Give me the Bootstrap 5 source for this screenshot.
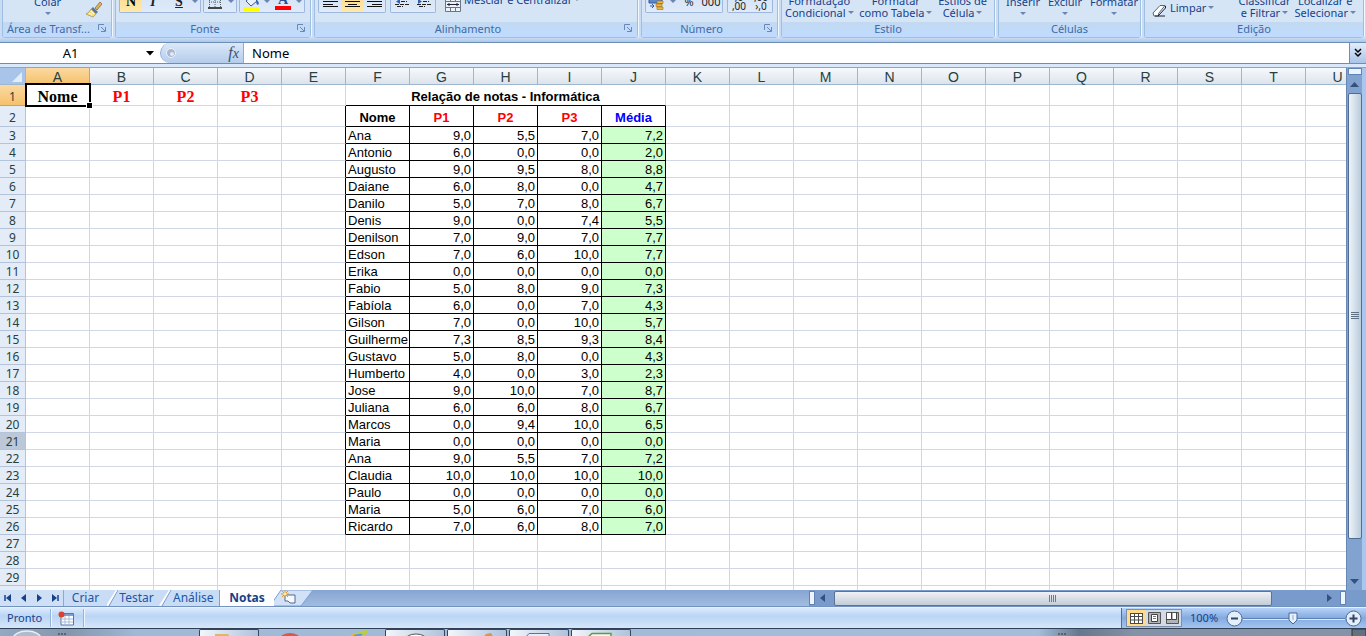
<!DOCTYPE html>
<html lang="pt-BR">
<head>
<meta charset="utf-8">
<meta name="viewport" content="width=device-width, initial-scale=1">
<title>Notas</title>
<link href="https://cdn.jsdelivr.net/npm/bootstrap@5.3.0/dist/css/bootstrap.min.css" rel="stylesheet">
<style>
:root{--ui:"Noto Sans","Open Sans",sans-serif;--grid:"Liberation Sans",Arial,sans-serif;--ink:#15428b;--edge:#8db2e3}
body{font-family:var(--ui);font-size:11px;line-height:12px;color:var(--ink);background:#bfdbff}
button{font:inherit;color:inherit;background:none;border:0;padding:0}
svg{display:block;flex:none}

/* ribbon */
.ribbon{height:42px;gap:3px;padding:0 2px 4px;background:linear-gradient(#c9dcf3 0 38px,#a9c7ea)}
.rgroup{border:1px solid #9ebfe2;border-top:0;border-radius:0 0 3px 3px;background:#d6e5f6;box-shadow:1px 0 0 #f0f7ff}
.rgroup:last-child{flex:1 1 0}
.rbody{height:22px;overflow:hidden;padding:0 3px}
.rname{height:15px;background:linear-gradient(#c2d9f1,#bfdbff);color:#3e6aaa;line-height:14px}
.rname svg{right:5px;top:2px}
.two{line-height:12px;padding-bottom:3px;white-space:nowrap;text-align:center}
.tools{border:1px solid #9db8dc;border-top:0;border-radius:0 0 2px 2px;height:22px;margin-bottom:9px;background:linear-gradient(#d3e2f5,#dfeafa)}
.tools button{height:21px;display:flex;align-items:center;justify-content:center;color:#222}
.tools .on{background:linear-gradient(#fdd98c,#ffe9a8)}
.tools .b22{width:22px}
.tools .b16{width:16px}
.tools .b10{width:10px}
.decimals{font-size:10px;line-height:9px}
.serifed{font-family:"Liberation Serif",serif;font-size:14px;font-weight:700}
.arr{display:inline-block;border:3px solid transparent;border-top-color:#6a86b0;border-bottom:0;vertical-align:3px;margin-left:2px}
.w-a{width:110px}.w-b{width:196px}.w-c{width:324px}.w-d{width:137px}.w-e{width:214px}.w-f{width:143px}

/* formula bar */
.fbar{height:22px;border:solid #6c8fb8;border-width:1px 0;background:#fff;color:#000;font-size:13px}
.fbar input{border:0;outline:0;padding:0;background:none;font:inherit;color:inherit;min-width:0}
.namebox{width:160px}
.namebox input{width:141px;text-align:center}
.pill{width:84px;background:linear-gradient(#dbe8f8,#b4cceb);border:1px solid #8faed6;border-width:0 1px 0 1px;border-radius:11px 0 0 11px}
.fx{font-size:16px;font-weight:400;color:#3d4f6c}
.expand{width:17px;background:linear-gradient(#e2edfa,#a9c4e8);border-left:1px solid #6c8fb8!important}
.strip{height:4px;background:#d9e8fa;border-bottom:1px solid #8aa6c4}

/* sheet */
.view{background:#fff;overflow:hidden;min-width:0;min-height:0}
.grid{table-layout:fixed;width:1px;border-collapse:separate;border-spacing:0;font-family:var(--grid);font-size:13px;color:#000;line-height:14px}
.grid td,.grid th{height:17px;padding:1px 1px 0;border:solid #d0d7e5;border-width:0 1px 1px 0;white-space:nowrap;font-weight:400;text-align:center;vertical-align:middle}
.grid tr.tall>*{height:21px;padding-top:3px}
.grid thead th{border-color:#9eb6ce;background:linear-gradient(#f7fafd,#dde3ec);color:#27413e;font-size:14px;line-height:14px}
.grid tbody th{border-color:#b3c4da;background:#e4ecf7;color:#27413e;font-family:var(--ui);font-size:12px}
.grid thead th.corner{background:#a9c4e9;padding:0}
.grid .hot{background:linear-gradient(#fbd9a2,#f5c26b)!important;border-color:#e39c3e!important}
.grid .over{background:#bcc8d8!important}
.grid td.edge-r{border-right-color:#000}
.grid td.edge-b{border-bottom-color:#000}
.grid td.boxed{border-color:#000}
.grid td.nm{text-align:left;padding-left:2px}
.grid td.nr{text-align:right;padding-right:2px}
.grid td.avg{background:#cfc;padding-right:2px}
.grid td.hd{font-weight:700}
.grid td.red{color:#f00}.grid td.blue{color:#00f}
.grid td.tms{font-family:"Liberation Serif",serif;font-size:16px;font-weight:700}
.grid td.cur{position:relative}
.cur::before{content:"";position:absolute;inset:-2px -2px -2px -1px;border:2px solid #000}
.cur::after{content:"";position:absolute;right:-3px;bottom:-3px;width:5px;height:5px;background:#000;outline:1px solid #fff}

/* scroll bars */
.vbar{width:16px;background:#82a2cf;border-left:1px solid #6787b5}
.vbar button{height:18px;display:flex;align-items:center}
.vthumb{width:14px;flex:0 1 446px;border:1px solid #4f6d96;border-radius:2px;background:linear-gradient(90deg,#eef3f8,#b9cbdc)}
.rim{width:4px;background:#a9c6ee}
.split{width:14px;height:7px;background:#eaf3ff;border:1px solid #6283b3}
.foot{height:17px;background:linear-gradient(#86a5d2,#a2bce0);border-bottom:1px solid #7292c0}
.tabsarea{width:809px;flex:0 1 auto;min-width:400px}
.tabnav{width:64px;height:16px;background:#cfe0f6;border-right:1px solid #8ba9d2}
.tab{height:16px;font-size:12px;line-height:16px;color:#2055a5;text-decoration:none;text-align:center}
.tab.t1{width:43px}.tab.t2{width:37px}.tab.t3{width:38px}
.tab.sel{width:54px;background:#fff;font-weight:700;color:#15428b}
.hthumb{height:15px;flex:0 1 438px;border:1px solid #5e7392;border-radius:2px;background:linear-gradient(#eef1f5,#c3ccd8)}
.hsplit{width:6px;height:14px;background:#eef5ff;border:1px solid #6283b3}
.hbar{background:#789bcc}
.corner-gap{width:20px}

/* status */
.status{height:21px;border-top:1px solid #e6f1ff;background:linear-gradient(#dcebfd,#b9d5f5 40%,#d6e6fa)}
.cell{height:18px;line-height:18px;padding:0 8px 0 7px;border-right:1px solid #93b3dc;box-shadow:1px 0 0 #eff6ff}
.zoomer{width:245px;height:20px;border-left:1px solid #4d6fa8;background:linear-gradient(#b8d2f7,#83aae0 50%,#a5c5f0)}
.views{border:1px solid #7d8fa8;background:#d3dbe6;height:18px}
.views button{width:18px;height:16px;display:flex;align-items:center;justify-content:center}
.views .on{background:#ffdc8c}
.zoomer input{appearance:none;-webkit-appearance:none;background:linear-gradient(#5c80b5,#5c80b5) center/100% 1px no-repeat,linear-gradient(#dbe9fc,#dbe9fc) 0 11px/100% 1px no-repeat;height:20px;margin:0;min-width:0}
.zoomer input::-webkit-slider-thumb{-webkit-appearance:none;width:10px;height:13px;background:url("data:image/svg+xml,%3Csvg xmlns='http://www.w3.org/2000/svg' width='10' height='13'%3E%3Cpath d='M1 1H9V8L5 12L1 8Z' fill='%23e8f1fd' stroke='%2347689a'/%3E%3Cpath d='M5 3V8' stroke='%238aa6cc'/%3E%3C/svg%3E")}

/* task bar */
.tasks{height:8px;border-top:1px solid #2f3f55;background:linear-gradient(90deg,#93a9c3 0,#8396ad 5%,#9fb9d7 10%,#a3bddb 76%,#66788d 79%,#8392a6 83%,#8493a8)}
.task{width:60px;height:8px;border:1px solid #34465e;border-width:1px 1px 0;border-radius:2px 2px 0 0;background:linear-gradient(100deg,#f3f7fb,#adc2dc)}
</style>
</head>
<body class="vh-100 overflow-hidden d-flex flex-column m-0">

<header class="ribbon d-flex flex-shrink-0 overflow-hidden">
  <section class="rgroup w-a">
    <div class="rbody d-flex align-items-end">
      <button class="two d-flex flex-column align-items-center px-4 ms-1">Colar<span class="arr mt-1 mb-1 ms-0"></span></button>
      <button aria-label="Pincel" class="pb-1"><svg width="17" height="17" viewBox="0 0 17 17" class="me-3"><path d="M10 7L15 1L17 3L12 9Z" fill="#dcb35c" stroke="#82622b" stroke-width=".7"/><path d="M8 6L13 11L11 13L6 8Z" fill="#55799f"/><path d="M6 8L11 13L8 16L1 13Q4 12 6 8Z" fill="#f5df78" stroke="#a98a36" stroke-width=".7"/><path d="M4 12L7 14M6 10L9 13" stroke="#fff"/></svg></button>
    </div>
    <div class="rname position-relative ps-1">Área de Transf...<svg class="position-absolute" width="8" height="8" data-launch></svg></div>
  </section>

  <section class="rgroup w-b">
    <div class="rbody d-flex align-items-end" style="gap:2px">
      <div class="tools d-flex"><button class="on serifed b22 text-black">N</button><button class="serifed fst-italic b22">I</button><button class="serifed text-decoration-underline b22 ms-1">S</button><button class="b10" aria-label="Mais"><span class="arr ms-0"></span></button></div>
      <div class="tools d-flex"><button aria-label="Bordas" class="b22"><svg width="14" height="14" viewBox="0 0 14 14"><path d="M1.500 1V12M12.500 1V12M1 1.500H13M7 1V12M1 7H13" stroke="#566" stroke-dasharray="1 1"/><path d="M0 13H14" stroke="#111" stroke-width="1.500"/></svg></button><button aria-label="Mais" class="b10"><span class="arr ms-0"></span></button></div>
      <div class="tools d-flex"><button aria-label="Cor de preenchimento" class="b22"><svg width="17" height="18" viewBox="0 0 17 18"><path d="M3 8L9 3L14 8L8 13Z" fill="#eaf1fa" stroke="#3e5c8a"/><path d="M14 7Q17 10 15 12Q12 11 14 7" fill="#2b66c4"/><path d="M0 14H16V18H0Z" fill="#ff0"/></svg></button><button aria-label="Mais" class="b10"><span class="arr ms-0"></span></button><button aria-label="Cor da fonte" class="b22 d-flex flex-column"><span class="serifed" style="color:#2a4f92;line-height:13px">A</span><svg width="16" height="4"><path d="M0 0H16V4H0Z" fill="#f00"/></svg></button><button aria-label="Mais" class="b10"><span class="arr ms-0"></span></button></div>
    </div>
    <div class="rname position-relative text-center pe-3">Fonte<svg class="position-absolute" width="8" height="8" data-launch></svg></div>
  </section>

  <section class="rgroup w-c">
    <div class="rbody d-flex align-items-end gap-1">
      <div class="tools d-flex"><button aria-label="Esquerda" class="b22"><svg width="15" height="13"><path d="M0 1.500H15M0 4.500H10M0 6.500H15M0 9.500H10M0 11.500H15" stroke="#111"/></svg></button><button aria-label="Centro" class="on b22"><svg width="15" height="13"><path d="M0 1.500H15M3 4.500H12M0 6.500H15M3 9.500H12M0 11.500H15" stroke="#111"/></svg></button><button aria-label="Direita" class="b22"><svg width="15" height="13"><path d="M0 1.500H15M5 4.500H15M0 6.500H15M5 9.500H15M0 11.500H15" stroke="#111"/></svg></button></div>
      <div class="tools d-flex"><button aria-label="Diminuir recuo" class="b22"><svg width="14" height="13"><path d="M0 1.500H14M6 4.500H14M6 6.500H12M0 9.500H14M2 11.500H8" stroke="#222" stroke-dasharray="4 1"/><path d="M5 4L1 6.500L5 9Z" fill="#2f62b4"/></svg></button><button aria-label="Aumentar recuo" class="b22"><svg width="14" height="13"><path d="M0 1.500H14M6 4.500H14M6 6.500H12M0 9.500H14M2 11.500H8" stroke="#222" stroke-dasharray="4 1"/><path d="M1 4L5 6.500L1 9Z" fill="#2f62b4"/></svg></button></div>
      <button class="d-flex align-items-center border-start ps-1 mb-2" style="gap:3px"><svg width="16" height="16" viewBox="0 0 16 16"><path d="M.5.500H15.500V15.500H.500Z" fill="#eef3fa" stroke="#6c7683"/><path d="M1 5.500H15M1 11.500H15M5.500 1V5M10.500 1V5M5.500 12V15M10.500 12V15" stroke="#6c7683"/><path d="M2 8.500H14M4 7V10M12 7V10" stroke="#223"/></svg><span class="mb-1 pb-1 text-nowrap">Mesclar e Centralizar<span class="arr"></span></span></button>
    </div>
    <div class="rname position-relative text-center pe-3">Alinhamento<svg class="position-absolute" width="8" height="8" data-launch></svg></div>
  </section>

  <section class="rgroup w-d">
    <div class="rbody d-flex align-items-end gap-1">
      <div class="tools d-flex"><button aria-label="Moeda" class="b22"><svg width="18" height="18" viewBox="0 0 18 18"><path d="M1 2H14V10H1Z" fill="#5f86c6" stroke="#335a9b"/><path d="M9 8h6v2.500h-6zM8 11h6v2.500h-6zM9 14h6v2.500h-6z" fill="#f0b93c" stroke="#a5690e" stroke-width=".6"/><path d="M2 13H6M4 11L6 13L4 15" stroke="#2d5cb0" fill="none"/></svg></button><button aria-label="Mais" class="b10"><span class="arr ms-0"></span></button><button class="b22">%</button><button class="b22">000</button></div>
      <div class="tools d-flex"><button aria-label="Aumentar casas decimais" class="b22 decimals">,0<br>,00</button><button aria-label="Diminuir casas decimais" class="b22 decimals">,00<br>›,0</button></div>
    </div>
    <div class="rname position-relative text-center pe-3">Número<svg class="position-absolute" width="8" height="8" data-launch></svg></div>
  </section>

  <section class="rgroup w-e">
    <div class="rbody d-flex align-items-end justify-content-between">
      <button class="two">Formatação<br>Condicional<span class="arr"></span></button>
      <button class="two">Formatar<br>como Tabela<span class="arr"></span></button>
      <button class="two pe-1">Estilos de<br>Célula<span class="arr"></span></button>
    </div>
    <div class="rname text-center">Estilo</div>
  </section>

  <section class="rgroup w-f">
    <div class="rbody d-flex align-items-end gap-2">
      <button class="two d-flex flex-column align-items-center ps-1">Inserir<span class="arr mt-1 mb-1 ms-0"></span></button>
      <button class="two d-flex flex-column align-items-center">Excluir<span class="arr mt-1 mb-1 ms-0"></span></button>
      <button class="two d-flex flex-column align-items-center">Formatar<span class="arr mt-1 mb-1 ms-0"></span></button>
    </div>
    <div class="rname text-center">Células</div>
  </section>

  <section class="rgroup">
    <div class="rbody d-flex align-items-end">
      <button class="d-flex align-items-center ps-1 pb-1 me-auto" style="gap:3px"><svg width="15" height="13" viewBox="0 0 15 13"><path d="M1 9L8 1.500H13L6.500 9.500V12H2Z" fill="#fff" stroke="#55657c"/><path d="M6 12L13.500 4V2M3 12H13" stroke="#222" fill="none"/></svg><span class="pb-1">Limpar<span class="arr"></span></span></button>
      <button class="two me-1">Classificar<br>e Filtrar<span class="arr"></span></button>
      <button class="two pe-1">Localizar e<br>Selecionar<span class="arr"></span></button>
    </div>
    <div class="rname text-center">Edição</div>
  </section>
</header>

<div class="fbar d-flex flex-shrink-0 align-items-stretch">
  <div class="namebox d-flex align-items-center"><input aria-label="Caixa de nome" value="A1"><button aria-label="Nomes" class="ms-1"><svg width="9" height="5"><path d="M1 0H9L5 4.500Z" fill="#000"/></svg></button></div>
  <div class="pill d-flex align-items-center justify-content-between px-1"><svg width="12" height="12"><circle cx="6" cy="6" r="4.500" fill="#a9b8d2" stroke="#edf3fb"/><circle cx="7" cy="7" r="2" fill="#e4e8f2"/></svg><button aria-label="Inserir função" class="serifed fx fst-italic">f<small>x</small></button></div>
  <input class="flex-fill ms-2" aria-label="Fórmula" value="Nome">
  <button class="expand d-flex align-items-center justify-content-center" aria-label="Expandir"><svg width="8" height="10"><path d="M1 1L4 4L7 1M1 5L4 8L7 5" fill="none" stroke="#000" stroke-width="1.500"/></svg></button>
</div>
<div class="strip flex-shrink-0"></div>

<main class="d-flex flex-fill" style="min-height:0">
  <div class="view flex-fill" id="view"><table class="grid" id="grid"></table></div>
  <div class="vbar d-flex flex-column align-items-center">
    <div class="split"></div>
    <button aria-label="Para cima"><svg width="9" height="5"><path d="M0 5L4.500 0L9 5Z" fill="#34507e"/></svg></button>
    <div class="vthumb d-flex align-items-center justify-content-center"><svg width="8" height="8"><path d="M0 .500H8M0 2.500H8M0 4.500H8M0 6.500H8" stroke="#5d7287"/></svg></div>
    <button aria-label="Para baixo" class="mt-auto"><svg width="9" height="5"><path d="M0 0L4.500 5L9 0Z" fill="#34507e"/></svg></button>
  </div>
  <div class="rim"></div>
</main>

<div class="foot d-flex flex-shrink-0">
  <div class="tabsarea d-flex">
    <div class="tabnav d-flex align-items-center justify-content-around">
      <button aria-label="Primeira"><svg width="8" height="8"><path d="M1 1V7" stroke="#15428b" stroke-width="1.500"/><path d="M7 0V8L2 4Z" fill="#15428b"/></svg></button>
      <button aria-label="Anterior"><svg width="6" height="8"><path d="M5 0V8L0 4Z" fill="#15428b"/></svg></button>
      <button aria-label="Próxima"><svg width="6" height="8"><path d="M1 0V8L6 4Z" fill="#15428b"/></svg></button>
      <button aria-label="Última"><svg width="8" height="8"><path d="M7 1V7" stroke="#15428b" stroke-width="1.500"/><path d="M1 0V8L6 4Z" fill="#15428b"/></svg></button>
    </div>
    <nav class="d-flex" style="background:#c9dcf5">
      <a class="tab t1" href="#">Criar</a><svg width="11" height="16"><path d="M10 0L0 16" stroke="#fff" stroke-width="2"/><path d="M11 0L2 16" stroke="#7f9fce"/></svg>
      <a class="tab t2" href="#">Testar</a><svg width="18" height="16"><path d="M15 0L5 16" stroke="#fff" stroke-width="2"/><path d="M16 0L7 16" stroke="#7f9fce"/></svg>
      <a class="tab t3" href="#">Análise</a><svg width="9" height="16"><path d="M8.500 0V16" stroke="#7f9fce"/></svg>
      <a class="tab sel" href="#">Notas</a>
    </nav>
    <button aria-label="Inserir planilha"><svg width="40" height="16"><path d="M0 0H39L27 16H-8Z" fill="#d0e1f8" stroke="#7f9fce"/><path d="M0 0H7L-4 15Z" fill="#fff"/><path d="M7 0L-4 16" stroke="#7f9fce"/><path d="M11 5H21V13H16L14 11H11Z" fill="#f5f9ff" stroke="#52698e"/><path d="M7 4H15M11 0V8M8 1L14 7M14 1L8 7" stroke="#e0962b"/><circle cx="11" cy="4" r="1.500" fill="#fff3a0"/></svg></button>
  </div>
  <div class="hbar d-flex flex-fill align-items-center">
    <div class="hsplit"></div>
    <button aria-label="Esquerda" class="px-1 me-1"><svg width="7" height="8"><path d="M6 0V8L1 4Z" fill="#34507e"/></svg></button>
    <div class="hthumb d-flex align-items-center justify-content-center"><svg width="8" height="7"><path d="M.5 0V7M2.500 0V7M4.500 0V7M6.500 0V7" stroke="#6d7b8e"/></svg></div>
    <button aria-label="Direita" class="ms-auto px-2"><svg width="6" height="8"><path d="M1 0V8L6 4Z" fill="#34507e"/></svg></button>
    <div class="hsplit"></div><div class="corner-gap"></div>
  </div>
</div>

<footer class="status d-flex align-items-center flex-shrink-0">
  <span class="cell">Pronto</span>
  <button aria-label="Gravar macro" class="cell d-flex align-items-center"><svg width="17" height="15" viewBox="0 0 17 15"><path d="M3 2.500H15.500V14H3Z" fill="#fff" stroke="#5976a8"/><path d="M3 3H15V5H3Z" fill="#7b9fd8"/><path d="M3 8H15M3 11H15M7 5V14M11 5V14" stroke="#a9bbd8"/><circle cx="3.500" cy="3.500" r="3" fill="#d9412f"/></svg></button>
  <div class="zoomer d-flex align-items-center ms-auto ps-1">
    <div class="views d-flex">
      <button class="on" aria-label="Normal"><svg width="13" height="11"><path d="M0 .500H13V10.500H0Z" fill="#fff"/><path d="M0 .500H13M0 3.500H13M0 7H13M0 10.500H13M.5 0V11M4.500 0V11M8.500 0V11M12.500 0V11" stroke="#4a4a4a"/></svg></button>
      <button aria-label="Layout"><svg width="13" height="12"><path d="M.5.500H12.500V11.500H.500Z" fill="#b0b4b8" stroke="#555"/><path d="M3.500 2.500H9.500V9.500H3.500Z" fill="#fff" stroke="#444"/><path d="M5 4.500H8M5 6.500H8" stroke="#777"/></svg></button>
      <button aria-label="Quebras"><svg width="13" height="12"><path d="M.5.500H12.500V11.500H.500Z" fill="#b0b4b8" stroke="#555"/><path d="M1 1H5V7H1ZM7 1H10V7H7Z" fill="#fff"/><path d="M5.500 0V7.500H0M10.500 0V7.500H6" stroke="#444" fill="none"/></svg></button>
    </div>
    <span class="ps-2 pe-2 text-nowrap">100%</span>
    <button aria-label="Reduzir"><svg width="17" height="17"><circle cx="8.500" cy="8.500" r="7.500" fill="#e5effc" stroke="#4d6a95"/><path d="M5 8.500H12" stroke="#2f4564" stroke-width="2"/></svg></button>
    <input type="range" class="flex-fill" min="0" max="100" value="49" aria-label="Zoom">
    <button aria-label="Ampliar" class="me-1"><svg width="17" height="17"><circle cx="8.500" cy="8.500" r="7.500" fill="#e5effc" stroke="#4d6a95"/><path d="M4.500 8.500H12.500M8.500 4.500V12.500" stroke="#2f4564" stroke-width="2"/></svg></button>
  </div>
</footer>

<div class="tasks d-flex flex-shrink-0 overflow-hidden">
  <svg width="199" height="8"><ellipse cx="27" cy="10" rx="14" ry="8" fill="#aebccd" stroke="#e8eef6" stroke-width="1.500"/><path d="M58 5H67" stroke="#333" stroke-dasharray="2 1"/></svg>
  <div class="task"><svg width="58" height="8"><path d="M15 4H28L31 8H15Z" fill="#e0b566"/></svg></div>
  <svg width="126" height="8"><ellipse cx="31" cy="10" rx="10" ry="6" fill="#d9574c"/><path d="M88 8Q95 3 107 4L104 8Z" fill="#e5bd38"/><path d="M97 4Q106 0 110 2Q107 6 100 6Z" fill="#b9cf3c"/><path d="M92 8Q97 4 104 5L101 8Z" fill="#5b9fd8"/></svg>
  <div class="d-flex" style="gap:2px">
    <div class="task"><svg width="58" height="8"><ellipse cx="30" cy="10" rx="11" ry="6" fill="#fff" stroke="#555"/></svg></div>
    <div class="task"><svg width="58" height="8"><path d="M35 8L38 4L43 3L46 8Z" fill="#d29a4e"/></svg></div>
    <div class="task"><svg width="58" height="8"><path d="M15 8L19 3.500H39V8" fill="#e6edf9" stroke="#5572b4"/></svg></div>
    <div class="task"><svg width="58" height="8"><path d="M15 8L20 3.500H39V8" fill="#f0f8ec" stroke="#5a9f3c" stroke-width="1.500"/></svg></div>
  </div>
  <svg class="ms-auto" width="310" height="8"><path d="M2 5H11" stroke="#333" stroke-dasharray="2 1"/><path d="M296 0H310V8H296Z" fill="#66717f" stroke="#333"/></svg>
</div>

<script src="https://cdn.jsdelivr.net/npm/bootstrap@5.3.0/dist/js/bootstrap.bundle.min.js"></script>
<script>
const students = `Ana 9,0 5,5 7,0 7,2|Antonio 6,0 0,0 0,0 2,0|Augusto 9,0 9,5 8,0 8,8|Daiane 6,0 8,0 0,0 4,7|Danilo 5,0 7,0 8,0 6,7|Denis 9,0 0,0 7,4 5,5|Denilson 7,0 9,0 7,0 7,7|Edson 7,0 6,0 10,0 7,7|Erika 0,0 0,0 0,0 0,0|Fabio 5,0 8,0 9,0 7,3|Fabíola 6,0 0,0 7,0 4,3|Gilson 7,0 0,0 10,0 5,7|Guilherme 7,3 8,5 9,3 8,4|Gustavo 5,0 8,0 0,0 4,3|Humberto 4,0 0,0 3,0 2,3|Jose 9,0 10,0 7,0 8,7|Juliana 6,0 6,0 8,0 6,7|Marcos 0,0 9,4 10,0 6,5|Maria 0,0 0,0 0,0 0,0|Ana 9,0 5,5 7,0 7,2|Claudia 10,0 10,0 10,0 10,0|Paulo 0,0 0,0 0,0 0,0|Maria 5,0 6,0 7,0 6,0|Ricardo 7,0 6,0 8,0 7,0`.split('|').map(s => s.split(' '));

// Dialog launcher arrow in the corner of a ribbon group
document.querySelectorAll('[data-launch]').forEach(s => s.innerHTML = '<path d="M.5 6V.500H6M3 3L7 7M7.500 3V7.500H3" fill="none" stroke="#6888b8"/>');

const view = document.getElementById('view');
const cols = Math.min(26, Math.ceil((view.clientWidth - 26) / 64));
const rows = Math.max(26, Math.ceil((view.clientHeight - 25) / 17));
const first = 5; // column F
let h = '<colgroup><col style="width:26px">' + '<col style="width:64px">'.repeat(cols) + '</colgroup><thead><tr><th class="corner"><svg width="25" height="16"><path d="M22 4V14H12Z" fill="#e3edfa"/></svg></th>';
for (let c = 0; c < cols; c++) h += `<th${c ? '' : ' class="hot"'}>${String.fromCharCode(65 + c)}</th>`;
h += '</tr></thead><tbody>';
for (let r = 1; r <= rows; r++) {
  h += `<tr${r < 3 ? ' class="tall"' : ''}><th class="${r === 1 ? 'hot' : r === 21 ? 'over' : ''}">${r}</th>`;
  for (let c = 0; c < cols; c++) {
    const k = c - first;
    if (r === 1 && c < 4) h += `<td class="tms ${c ? 'red' : 'cur'}">${['Nome', 'P1', 'P2', 'P3'][c]}</td>`;
    else if (r === 1 && k === 0) { h += '<td colspan="5" class="hd edge-b">Relação de notas - Informática</td>'; c += 4; }
    else if (r === 2 && k >= 0 && k < 5) h += `<td class="boxed hd ${k === 4 ? 'blue' : k ? 'red' : ''}">${['Nome', 'P1', 'P2', 'P3', 'Média'][k]}</td>`;
    else if (r > 2 && r < 27 && k >= 0 && k < 5) h += `<td class="boxed ${k ? 'nr' : 'nm'} ${k === 4 ? 'avg' : ''}">${students[r - 3][k]}</td>`;
    else h += `<td${k === -1 && r > 1 && r < 27 ? ' class="edge-r"' : ''}></td>`;
  }
  h += '</tr>';
}
document.getElementById('grid').innerHTML = h + '</tbody>';
</script>
</body>
</html>
